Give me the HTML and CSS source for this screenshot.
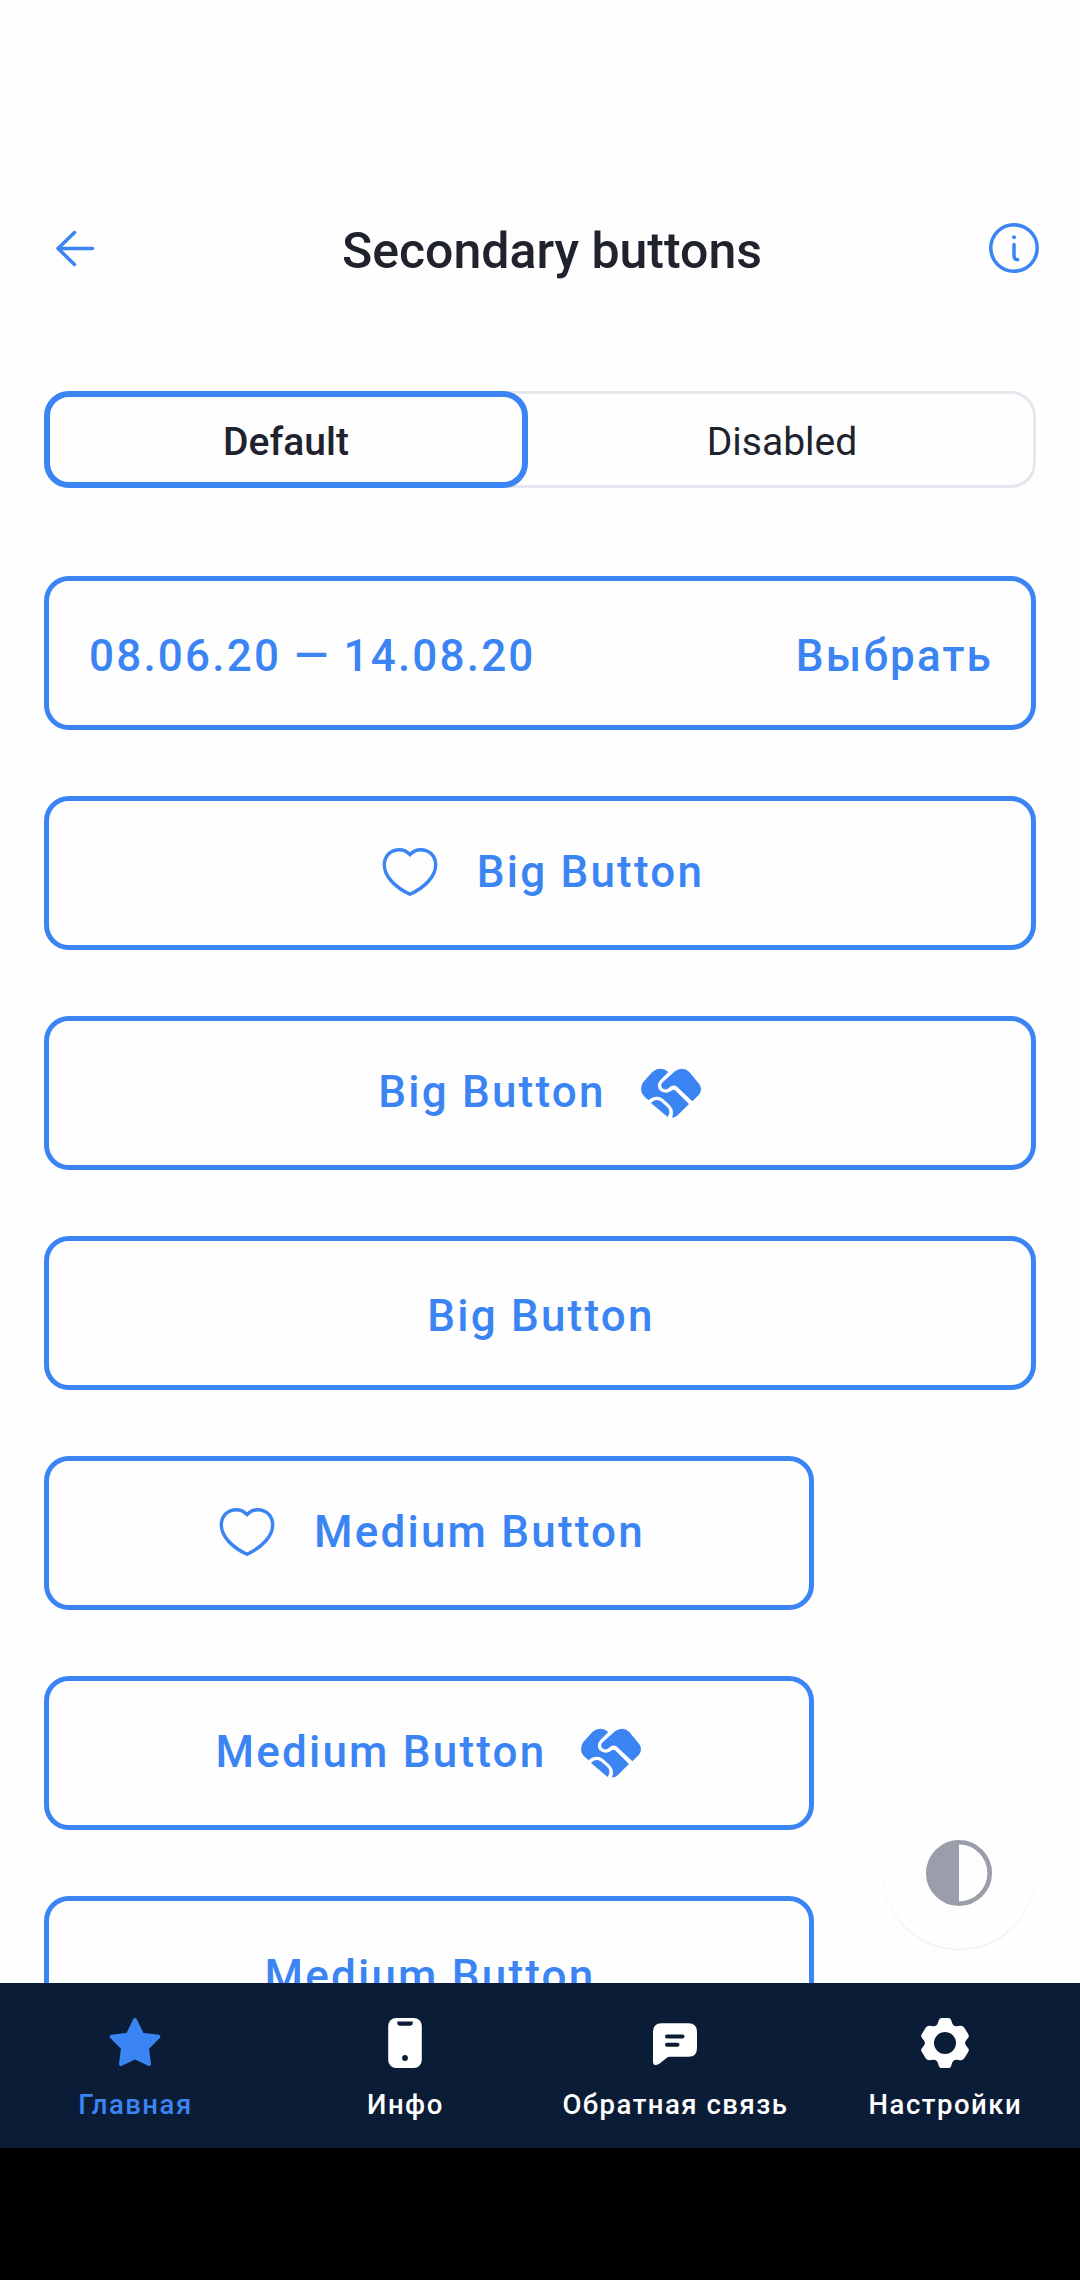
FILE: index.html
```html
<!DOCTYPE html>
<html lang="ru">
<head>
<meta charset="utf-8">
<title>Secondary buttons</title>
<link rel="stylesheet" href="styles.css">
</head>
<body>
<svg class="sprite" width="0" height="0" aria-hidden="true">
  <symbol id="heart" viewBox="0 0 66 66">
    <path d="M33 15.500C29.500 12 26 10.700 22.500 10.700C13.500 10.700 7.300 17 7.300 25.700C7.300 37 17.500 48 33 55.300C48.500 48 58.700 37 58.700 25.700C58.700 17 52.500 10.700 43.500 10.700C40 10.700 36.500 12 33 15.500Z" fill="none" stroke="currentColor" stroke-width="3.400" stroke-linejoin="miter"/>
  </symbol>
  <symbol id="handshake" viewBox="54 28 198 198">
    <g fill="currentColor">
      <path d="M145 67Q134 57 122 57Q108 57 97 67L70 97Q63 106 63 119Q63 131 72 140L86 152Q95 141 111 141Q121 141 129 148L148 165Q159 176 159 190Q159 197 156 204Q165 204 173 197L207 163L165 122Q161 118 156 122Q148 129 138 129Q126 129 118 121Q111 111 115 100Q117 95 122 90Z"/>
      <path d="M186 57Q174 57 165 65L128 98Q121 105 125 113Q132 123 143 117L151 111Q161 104 171 111L217 155L237 135Q243 128 243 118Q243 109 237 102L208 67Q198 57 186 57Z"/>
      <path d="M93 160L143 202Q149 193 148 183Q147 177 141 171L122 155Q106 145 93 160Z"/>
    </g>
  </symbol>
</svg>

<main class="screen">
  <header class="header">
    <button class="icon-button" aria-label="Назад">
      <svg width="66" height="66" viewBox="0 0 66 66" fill="none" stroke="currentColor" stroke-width="3.500" stroke-linecap="round" stroke-linejoin="round"><path d="M50.500 33.500H16M32.500 17.500L16 33.500L32.500 49.500"/></svg>
    </button>
    <h1 class="title">Secondary buttons</h1>
    <button class="icon-button" aria-label="Информация">
      <svg width="66" height="66" viewBox="0 0 66 66" fill="none" stroke="currentColor" stroke-width="3.500" stroke-linecap="round"><circle cx="33" cy="33" r="23.200"/><path d="M33 29.500V41Q33 44.500 36.700 44.700"/><circle cx="33" cy="22.300" r="2" fill="currentColor" stroke="none"/></svg>
    </button>
  </header>

  <div class="tabs">
    <button class="tab tab-active">Default</button>
    <button class="tab">Disabled</button>
  </div>

  <section class="list">
    <button class="button button-split"><span class="label">08.06.20 — 14.08.20</span><span class="label">Выбрать</span></button>
    <button class="button button-icon"><svg class="icon"><use href="#heart"/></svg><span class="label">Big Button</span></button>
    <button class="button button-icon"><span class="label">Big Button</span><svg class="icon"><use href="#handshake"/></svg></button>
    <button class="button"><span class="label">Big Button</span></button>
    <button class="button button-icon medium"><svg class="icon"><use href="#heart"/></svg><span class="label">Medium Button</span></button>
    <button class="button button-icon medium"><span class="label">Medium Button</span><svg class="icon"><use href="#handshake"/></svg></button>
    <button class="button medium"><span class="label">Medium Button</span></button>
  </section>

  <button class="theme-toggle" aria-label="Тема">
    <svg width="66" height="66" viewBox="0 0 66 66"><circle cx="33" cy="33" r="30.700" fill="none" stroke="currentColor" stroke-width="4.600"/><path d="M33 2A31 31 0 0 0 33 64Z" fill="currentColor"/></svg>
  </button>
</main>

<nav class="nav">
  <a class="nav-item nav-active">
    <svg class="icon" viewBox="0 0 66 66"><path d="M33 10L40 24.700L56.300 26.700L45 38L47 54L33 47.300L19 54L21 38L9.700 26.700L26 24.700Z" fill="currentColor" stroke="currentColor" stroke-width="4" stroke-linejoin="round"/></svg>
    <span>Главная</span>
  </a>
  <a class="nav-item">
    <svg class="icon" viewBox="0 0 66 66"><rect x="16.200" y="8" width="33.600" height="50" rx="8" fill="currentColor"/><path class="cut" d="M25.300 11.500H40.700V13Q40.700 15.700 38 15.700H28Q25.300 15.700 25.300 13Z"/><circle class="cut" cx="33" cy="48" r="2.900"/></svg>
    <span>Инфо</span>
  </a>
  <a class="nav-item">
    <svg class="icon" viewBox="0 0 66 66"><path d="M19.500 13.200H46.500Q55 13.200 55 21.700V38Q55 46.800 46.500 46.800H27.500Q26 46.800 24.500 48L17 54Q11 57 11 51.500V21.700Q11 13.200 19.500 13.200Z" fill="currentColor"/><path class="cut-line" d="M25 26.500H40.500M25 34.700H35.500"/></svg>
    <span>Обратная связь</span>
  </a>
  <a class="nav-item">
    <svg class="icon" viewBox="-33 -33 66 66"><path fill-rule="evenodd" fill="currentColor" d="M-4 -25H4Q5.500 -25 6.300 -22.500L7.200 -19.700Q8.500 -16.300 12 -16.700L15 -17.200Q17.800 -17.500 19.300 -15.300L23.200 -9Q24.500 -6.800 23 -5L21 -2.600Q19.200 0 21 2.600L23 5Q24.500 6.800 23.200 9L19.300 15.300Q17.800 17.500 15 17.200L12 16.700Q8.500 16.300 7.200 19.700L6.300 22.500Q5.500 25 4 25H-4Q-5.500 25 -6.300 22.500L-7.200 19.700Q-8.500 16.300 -12 16.700L-15 17.200Q-17.800 17.500 -19.300 15.300L-23.200 9Q-24.500 6.800 -23 5L-21 2.600Q-19.200 0 -21 -2.600L-23 -5Q-24.500 -6.800 -23.200 -9L-19.300 -15.300Q-17.800 -17.500 -15 -17.200L-12 -16.700Q-8.500 -16.300 -7.200 -19.700L-6.300 -22.500Q-5.500 -25 -4 -25ZM0 -11A11 11 0 1 0 0 11A11 11 0 1 0 0 -11Z"/></svg>
    <span>Настройки</span>
  </a>
</nav>
<div class="system-bar"></div>
</body>
</html>
```

FILE: styles.css
```css
* { box-sizing: border-box; }

body {
  margin: 0;
  width: 1080px;
  height: 2280px;
  display: flex;
  flex-direction: column;
  overflow: hidden;
  background: #fefefe;
  color: #20232d;
  font-family: Roboto, "Noto Sans", sans-serif;
}

button {
  margin: 0;
  padding: 0;
  border: 0;
  background: transparent;
  color: inherit;
  font: inherit;
}

svg { display: block; }
.sprite { position: absolute; }
.icon { width: 66px; height: 66px; flex: none; }

.screen {
  position: relative;
  height: 1983px;
  flex: none;
  overflow: hidden;
  padding-top: 215px;
}

.header {
  display: flex;
  align-items: center;
  height: 66px;
  padding: 0 33px 0 42px;
  color: #3b84f3;
}

.title {
  flex: 1;
  margin: 5px 0 0 15px;
  text-align: center;
  font-size: 50px;
  line-height: 66px;
  font-weight: 500;
  color: #20232d;
}

.tabs {
  display: flex;
  height: 97px;
  margin: 110px 44px 0;
  border-radius: 25px;
  box-shadow: inset 0 0 0 3px #e4e7ee;
}

.tab {
  flex: 1;
  padding-top: 4px;
  font-size: 39px;
  line-height: 90px;
}

.tab-active {
  flex: 0 0 484px;
  padding: 4px 0 0;
  border: 6px solid #3b84f3;
  border-radius: 25px;
  font-weight: 500;
  line-height: 80px;
  background: #fefefe;
}

.list {
  display: flex;
  flex-direction: column;
  gap: 66px;
  padding: 88px 44px 0;
}

.button {
  display: flex;
  align-items: center;
  justify-content: center;
  flex: none;
  width: 992px;
  height: 154px;
  padding: 6px 39px 0;
  border: 5px solid #3b84f3;
  border-radius: 25px;
  color: #3b84f3;
  font-size: 44px;
  font-weight: 500;
  line-height: 52px;
  letter-spacing: 2.200px;
  white-space: nowrap;
}

/* Balances the letter-spacing that trails the last glyph */
.label { margin: 0 -1px 0 1px; }

.button-split { justify-content: space-between; }
.button-icon { gap: 33px; padding: 0 39px 2px; }
.label + .icon { margin-right: -1px; }
.medium { width: 770px; }

.theme-toggle {
  position: absolute;
  right: 44px;
  bottom: 34px;
  display: flex;
  align-items: center;
  justify-content: center;
  width: 152px;
  height: 152px;
  margin-right: 1px;
  border-radius: 50%;
  background: #fefefe;
  box-shadow: 0 1px 1px rgba(0, 0, 0, 0.08);
  color: #9a9eaa;
}

.nav {
  display: grid;
  grid-template-columns: repeat(4, 1fr);
  height: 165px;
  flex: none;
  background: #0b1d36;
  color: #fff;
}

.nav-item {
  display: flex;
  flex-direction: column;
  align-items: center;
  padding-top: 27px;
  gap: 12px;
  font-size: 27.500px;
  line-height: 33px;
  font-weight: 500;
  letter-spacing: 1.500px;
  white-space: nowrap;
}

.nav-item span { margin: 0 -0.400px 0 0.400px; }
.nav-active { color: #3b84f3; }
.cut { fill: #0b1d36; }
.cut-line { fill: none; stroke: #0b1d36; stroke-width: 4; stroke-linecap: round; }

.system-bar { flex: 1; background: #000; }
```
